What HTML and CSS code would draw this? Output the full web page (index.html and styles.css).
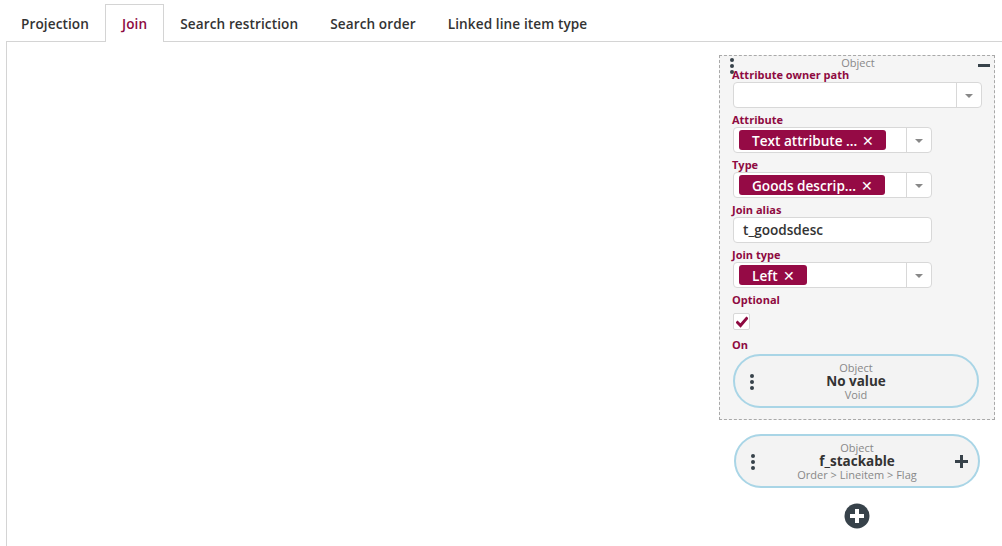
FILE: index.html
```html
<!DOCTYPE html>
<html>
<head>
<meta charset="utf-8">
<link rel="stylesheet" href="styles.css">
</head>
<body>
<div class="page">
  <nav class="tabs">
    <div class="tab">Projection</div>
    <div class="tab active">Join</div>
    <div class="tab">Search restriction</div>
    <div class="tab">Search order</div>
    <div class="tab">Linked line item type</div>
  </nav>
  <div class="panel">
    <div class="canvas"></div>
    <aside class="side">
      <div class="objbox">
        <span class="dots abs-dots"><i></i><i></i><i></i></span>
        <span class="minus"></span>
        <div class="objhead">Object</div>

        <label class="lbl">Attribute owner path</label>
        <div class="field select wide">
          <div class="val"></div>
          <div class="caret"><span></span></div>
        </div>

        <label class="lbl">Attribute</label>
        <div class="field select">
          <div class="val"><span class="tag">Text attribute ... <b>✕</b></span></div>
          <div class="caret"><span></span></div>
        </div>

        <label class="lbl">Type</label>
        <div class="field select">
          <div class="val"><span class="tag">Goods descrip... <b>✕</b></span></div>
          <div class="caret"><span></span></div>
        </div>

        <label class="lbl">Join alias</label>
        <div class="field input">t_goodsdesc</div>

        <label class="lbl">Join type</label>
        <div class="field select">
          <div class="val"><span class="tag">Left <b>✕</b></span></div>
          <div class="caret"><span></span></div>
        </div>

        <label class="lbl">Optional</label>
        <div class="checkrow">
          <span class="check">
            <svg width="12" height="12" viewBox="0 0 12 12"><path d="M1.5 6.5 L4.5 9.5 L10.5 2.5" fill="none" stroke="#8e0a41" stroke-width="3" stroke-linecap="square"/></svg>
          </span>
        </div>

        <label class="lbl">On</label>
        <div class="pill pill-on">
          <span class="dots"><i></i><i></i><i></i></span>
          <div class="pill-text">
            <div class="sm">Object</div>
            <div class="main">No value</div>
            <div class="sm">Void</div>
          </div>
        </div>
      </div>

      <div class="pill pill-second">
        <span class="dots"><i></i><i></i><i></i></span>
        <div class="pill-text">
          <div class="sm">Object</div>
          <div class="main">f_stackable</div>
          <div class="sm">Order &gt; Lineitem &gt; Flag</div>
        </div>
        <span class="plus"></span>
      </div>

      <div class="addbtn">
        <svg width="26" height="26" viewBox="0 0 26 26"><circle cx="13" cy="13" r="12.5" fill="#37424a"/><rect x="11" y="6" width="4" height="14" fill="#fff"/><rect x="6" y="11" width="14" height="4" fill="#fff"/></svg>
      </div>
    </aside>
  </div>
</div>
</body>
</html>
```

FILE: styles.css
```css
* { box-sizing: border-box; }
html, body { margin: 0; padding: 0; background: #fff; }
body {
  font-family: "Open Sans", "Liberation Sans", sans-serif;
  color: #333;
  width: 1002px;
  height: 546px;
  overflow: hidden;
}
.page { padding-top: 4px; height: 546px; display: flex; flex-direction: column; }
.tabs {
  display: flex;
  padding-left: 5px;
  height: 38px;
  position: relative;
  z-index: 1;
}
.tab {
  padding: 0 15px;
  height: 38px;
  line-height: 37px;
  font-size: 13.6px;
  letter-spacing: 0.1px;
  font-weight: 600;
  color: #333;
  border: 1px solid transparent;
  border-bottom: none;
}
.tab.active {
  color: #8e0a41;
  border-color: #d4d4d4;
  background: #fff;
  height: 38px;
  padding: 0 16px;
}
.panel {
  flex: 1;
  margin-left: 6px;
  margin-top: -1px;
  border-top: 1px solid #d4d4d4;
  border-left: 1px solid #d4d4d4;
  display: flex;
}
.canvas { flex: 1; }
.side {
  width: 276px;
  margin-right: 7px;
  margin-top: 13px;
  display: flex;
  flex-direction: column;
  align-items: center;
}
.objbox {
  position: relative;
  width: 276px;
  border: 1px dashed #a9a9a9;
  background: #f5f5f5;
  padding: 1px 11px 11px 13px;
  display: flex;
  flex-direction: column;
}
.objhead {
  text-align: center;
  font-size: 11px;
  line-height: 11px;
  color: #888;
  height: 11px;
}
.abs-dots { position: absolute; left: 10px; top: 2px; }
.dots { display: flex; flex-direction: column; gap: 2px; }
.dots i { display: block; width: 4px; height: 4px; border-radius: 50%; background: #37424a; }
.minus {
  position: absolute;
  right: 4px;
  top: 8px;
  width: 12px;
  height: 3px;
  background: #37424a;
}
.lbl {
  display: block;
  font-size: 11px;
  font-weight: 700;
  line-height: 14px;
  height: 14px;
  color: #8e0a41;
  margin-left: -1px;
}
.field {
  height: 26px;
  border: 1px solid #d8d8d8;
  border-radius: 4px;
  background: #fff;
  margin-bottom: 5px;
  width: 199px;
}
.field.wide { width: 249px; }
.select { display: flex; }
.select .val { flex: 1; display: flex; align-items: center; padding-left: 5px; }
.select .caret {
  width: 25px;
  border-left: 1px solid #d8d8d8;
  display: flex;
  align-items: center;
  justify-content: center;
}
.caret span {
  width: 0; height: 0;
  border-left: 4px solid transparent;
  border-right: 4px solid transparent;
  border-top: 4px solid #888;
  margin-top: 1px;
}
.tag {
  display: inline-flex;
  align-items: center;
  height: 20px;
  background: #950a45;
  color: #fff;
  font-size: 13.6px;
  font-weight: 600;
  border-radius: 3px;
  padding: 0 12px 0 13px;
  white-space: nowrap;
}
.tag b { font-weight: 400; margin-left: 5px; font-size: 14px; }
.input {
  font-size: 13.6px;
  font-weight: 600;
  line-height: 24px;
  padding-left: 9px;
  color: #333;
}
.checkrow { height: 26px; padding-top: 6px; margin-bottom: 5px; }
.check {
  display: flex;
  align-items: center;
  justify-content: center;
  width: 17px;
  height: 17px;
  border: 1px solid #d8d8d8;
  border-radius: 2px;
  background: #fff;
}
.pill {
  position: relative;
  height: 54px;
  border: 2px solid #a9d5e6;
  border-radius: 27px;
  background: #f3f3f3;
  display: flex;
  align-items: center;
}
.pill .dots { position: absolute; left: 15px; top: 18px; }
.pill-text { flex: 1; text-align: center; }
.pill-text .sm { font-size: 11px; line-height: 13px; color: #888; }
.pill-text .main { font-size: 13.5px; font-weight: 700; line-height: 14px; color: #333; }
.pill-on { margin-top: 2px; width: 246px; }
.pill-second { margin-top: 14px; width: 246px; }
.plus {
  position: absolute;
  right: 10px;
  top: 19px;
  width: 13px;
  height: 13px;
}
.plus::before, .plus::after { content: ""; position: absolute; background: #37424a; }
.plus::before { left: 5px; top: 0; width: 3px; height: 13px; }
.plus::after { left: 0; top: 5px; width: 13px; height: 3px; }
.addbtn { margin-top: 15px; height: 26px; }
```
